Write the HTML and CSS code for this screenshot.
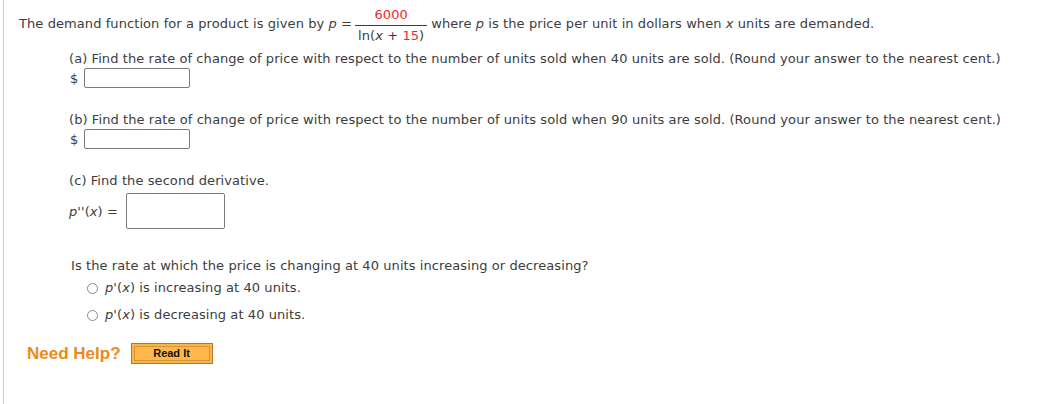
FILE: index.html
```html
<!DOCTYPE html>
<html>
<head>
<meta charset="utf-8">
<link rel="stylesheet" href="styles.css">
</head>
<body>
<div class="page">
  <div class="intro">
    <span>The demand function for a product is given by <i>p</i> =</span>
    <span class="frac">
      <span class="num red">6000</span>
      <span class="den">ln(<i>x</i> + <span class="red">15</span>)</span>
    </span>
    <span>where <i>p</i> is the price per unit in dollars when <i>x</i> units are demanded.</span>
  </div>
  <div class="parts">
    <div class="part">
      <div class="q">(a) Find the rate of change of price with respect to the number of units sold when 40 units are sold. (Round your answer to the nearest cent.)</div>
      <div class="ans"><span class="dollar">$</span><span class="box small"></span></div>
    </div>
    <div class="part">
      <div class="q">(b) Find the rate of change of price with respect to the number of units sold when 90 units are sold. (Round your answer to the nearest cent.)</div>
      <div class="ans"><span class="dollar">$</span><span class="box small"></span></div>
    </div>
    <div class="part partc">
      <div class="q">(c) Find the second derivative.</div>
      <div class="ans2"><span><i>p</i>''(<i>x</i>) =</span><span class="box big"></span></div>
    </div>
    <div class="rate">
      <div class="q">Is the rate at which the price is changing at 40 units increasing or decreasing?</div>
      <div class="opt"><span class="radio"></span><span><i>p</i>'(<i>x</i>) is increasing at 40 units.</span></div>
      <div class="opt"><span class="radio"></span><span><i>p</i>'(<i>x</i>) is decreasing at 40 units.</span></div>
    </div>
  </div>
  <div class="help">
    <span class="need">Need Help?</span>
    <span class="btn"><span class="btn-in">Read It</span></span>
  </div>
</div>
</body>
</html>
```
FILE: styles.css
```css
html, body { margin: 0; padding: 0; background: #fff; }
body {
  font-family: "DejaVu Sans", Verdana, sans-serif;
  font-size: 13px;
  letter-spacing: 0.08px;
  color: #3c3c3c;
}
.page {
  margin-left: 3px;
  border-left: 1px solid #cccccc;
  height: 404px;
  box-sizing: border-box;
  padding-left: 15px;
  padding-top: 6px;
}
i { font-style: italic; }
.red { color: #ef2a2a; }
.intro {
  display: flex;
  align-items: center;
  height: 34px;
  white-space: nowrap;
}
.frac {
  display: inline-flex;
  flex-direction: column;
  align-items: center;
  margin: 4px 6px 0 5px;
}
.num { padding: 0 2px 3px; border-bottom: 1px solid #3c3c3c; width: 100%; text-align: center; }
.den { padding: 2px 1px 0; }
.parts { padding-left: 50px; }
.q { line-height: 16px; white-space: nowrap; }
.part { margin-top: 11px; }
.part + .part { margin-top: 24px; }
.ans { display: flex; align-items: center; margin-top: 1px; }
.dollar { width: 14px; padding-left: 1px; }
.box { display: inline-block; border: 1px solid #7a7a7a; border-radius: 2px; box-sizing: border-box; background: #fff; }
.box.small { width: 106px; height: 20px; }
.partc { margin-top: 24px !important; }
.ans2 { display: flex; align-items: center; margin-top: 4px; gap: 8px; }
.box.big { width: 99px; height: 36px; }
.rate { margin-top: 29px; padding-left: 2px; }
.opt { display: flex; align-items: center; margin-top: 6px; padding-left: 16px; gap: 7px; line-height: 16px; }
.opt + .opt { margin-top: 11px; }
.radio { width: 11px; height: 11px; border: 1px solid #8a8a8a; border-radius: 50%; box-sizing: border-box; }
.help { display: flex; align-items: center; margin-top: 20px; padding-left: 8px; gap: 10px; letter-spacing: 0; }
.need { font-family: "Liberation Sans", Arial, sans-serif; font-weight: bold; font-size: 17px; color: #ee8a14; }
.btn {
  display: inline-block;
  border: 1px solid #b8742a;
  background: #fcb447;
  padding: 2px;
}
.btn-in {
  display: block;
  width: 74px;
  height: 13px;
  border: 1px solid #d99535;
  background: #ffb94a;
  font-family: "Liberation Sans", Arial, sans-serif;
  font-weight: bold;
  font-size: 11px;
  line-height: 13px;
  text-align: center;
  color: #111;
}
```
